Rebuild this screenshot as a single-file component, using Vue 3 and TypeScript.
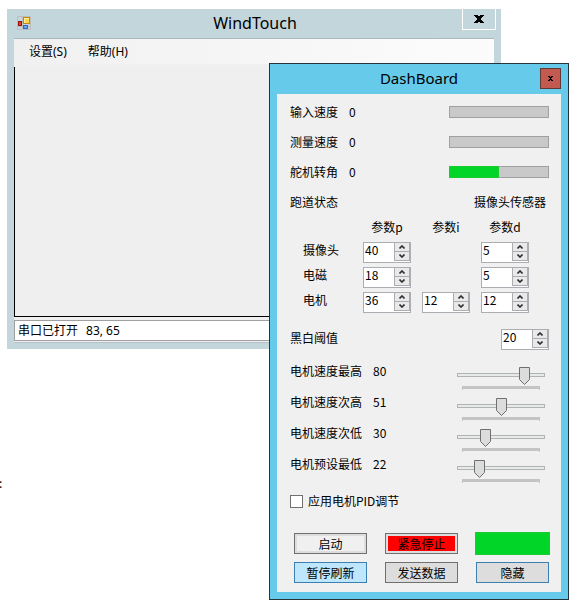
<script setup lang="ts">
import { reactive, ref } from 'vue'

interface Meter { label: string; value: number; fill: number }
interface Param { label: string; p: number | null; i: number | null; d: number | null }
interface Speed { label: string; value: number }
type Key = 'p' | 'i' | 'd'

const meters = reactive<Meter[]>([
  { label: '输入速度', value: 0, fill: 0 },
  { label: '测量速度', value: 0, fill: 0 },
  { label: '舵机转角', value: 0, fill: 50 },
])

const keys: Key[] = ['p', 'i', 'd']

const params = reactive<Param[]>([
  { label: '摄像头', p: 40, i: null, d: 5 },
  { label: '电磁', p: 18, i: null, d: 5 },
  { label: '电机', p: 36, i: 12, d: 12 },
])

const threshold = ref(20)

const speeds = reactive<Speed[]>([
  { label: '电机速度最高', value: 80 },
  { label: '电机速度次高', value: 51 },
  { label: '电机速度次低', value: 30 },
  { label: '电机预设最低', value: 22 },
])

const usePid = ref(false)

function step(row: Param, key: Key, delta: number) {
  row[key] = (row[key] ?? 0) + delta
}
</script>

<template>
  <div class="desktop">
    <section class="window main">
      <header class="main-title">
        <svg class="app-icon" width="14" height="14" viewBox="0 0 14 14" aria-hidden="true">
          <path d="M0.5 0.5h13v13h-13zM5.500 0v14M0 10.500h14" fill="none" stroke="#bdbdbd" />
          <rect x="6.500" y="1.500" width="6" height="6" fill="#ffd84a" stroke="#c08a10" />
          <path d="M7 2h5v1H8v4H7z" fill="#fff0a0" />
          <rect x="1.500" y="5.500" width="3" height="4" fill="#d8452c" stroke="#9c1408" />
          <rect x="6.500" y="9.500" width="4" height="3" fill="#6ba2f2" stroke="#3567c4" />
        </svg>
        <h1>WindTouch</h1>
        <button class="main-close" type="button" aria-label="关闭">
          <svg width="10" height="8" viewBox="0 0 10 8"><path d="M0 0h4v1h2V0h4v1H9v1H8v1H7v2h1v1h1v1h1v1H6V7H4v1H0V7h1V6h1V5h1V3H2V2H1V1H0z" fill="#000" /></svg>
        </button>
      </header>
      <div class="client">
        <nav class="menu">
          <button type="button">设置(S)</button>
          <button type="button">帮助(H)</button>
        </nav>
        <div class="canvas"></div>
        <footer class="status"><span>串口已打开</span><span>83, 65</span></footer>
      </div>
    </section>

    <span class="stray">:</span>

    <section class="window dash">
      <header class="dash-title">
        <h2>DashBoard</h2>
        <button class="dash-close" type="button" aria-label="关闭">
          <svg width="5" height="5" viewBox="0 0 5 5"><path d="M0 0h2v1h1V0h2v1H4v1H3v1h1v1h1v1H3V4H2v1H0V4h1V3h1V2H1V1H0z" fill="#000" /></svg>
        </button>
      </header>

      <div class="panel">
        <div v-for="m in meters" :key="m.label" class="row">
          <span class="name">{{ m.label }}</span>
          <output>{{ m.value }}</output>
          <div class="meter"><div v-if="m.fill" class="fill" :style="{ width: m.fill + '%' }"></div></div>
        </div>
        <div class="row">
          <span class="name">跑道状态</span>
          <span class="sensor">摄像头传感器</span>
        </div>

        <div class="params">
          <span></span>
          <span v-for="k in keys" :key="k" class="head">参数{{ k }}</span>
          <template v-for="row in params" :key="row.label">
            <span class="param-name">{{ row.label }}</span>
            <div v-for="k in keys" :key="k">
              <div v-if="row[k] !== null" class="spin">
                <input v-model.number="row[k]" type="number" :aria-label="row.label + '参数' + k" />
                <div class="arrows">
                  <button type="button" aria-label="增加" @click="step(row, k, 1)">
                    <svg width="6" height="4" viewBox="0 0 6 4"><path d="M0.500 3.500L3 1L5.500 3.500" fill="none" stroke="#303030" stroke-width="1.600" /></svg>
                  </button>
                  <button type="button" aria-label="减少" @click="step(row, k, -1)">
                    <svg width="6" height="4" viewBox="0 0 6 4"><path d="M0.500 0.500L3 3L5.500 0.500" fill="none" stroke="#303030" stroke-width="1.600" /></svg>
                  </button>
                </div>
              </div>
            </div>
          </template>
        </div>

        <div class="threshold">
          <label for="threshold">黑白阈值</label>
          <div class="spin">
            <input id="threshold" v-model.number="threshold" type="number" />
            <div class="arrows">
              <button type="button" aria-label="增加" @click="threshold++">
                <svg width="6" height="4" viewBox="0 0 6 4"><path d="M0.500 3.500L3 1L5.500 3.500" fill="none" stroke="#303030" stroke-width="1.600" /></svg>
              </button>
              <button type="button" aria-label="减少" @click="threshold--">
                <svg width="6" height="4" viewBox="0 0 6 4"><path d="M0.500 0.500L3 3L5.500 0.500" fill="none" stroke="#303030" stroke-width="1.600" /></svg>
              </button>
            </div>
          </div>
        </div>

        <div v-for="(s, n) in speeds" :key="s.label" class="speed">
          <label :for="'speed' + n">{{ s.label }}</label>
          <output>{{ s.value }}</output>
          <div class="slider">
            <input :id="'speed' + n" v-model.number="s.value" type="range" min="0" max="100" />
            <div class="ticks"></div>
          </div>
        </div>

        <label class="check"><input v-model="usePid" type="checkbox" />应用电机PID调节</label>

        <div class="actions">
          <button class="btn start" type="button">启动</button>
          <button class="btn stop" type="button">紧急停止</button>
          <div class="lamp"></div>
          <button class="btn hot" type="button">暂停刷新</button>
          <button class="btn" type="button">发送数据</button>
          <button class="btn focus" type="button">隐藏</button>
        </div>
      </div>
    </section>
  </div>
</template>

<style>
body {
  background: #fff;
}
</style>

<style scoped>
.desktop,
.desktop * {
  box-sizing: border-box;
}
.desktop {
  position: relative;
  min-height: 100vh;
  padding: 9px 72px 0 7px;
  overflow: hidden;
  color: #000;
  font: 12px/18px "Noto Sans CJK SC", sans-serif;
}
button,
input {
  margin: 0;
  padding: 0;
  border: 0;
  border-radius: 0;
  background: none;
  color: inherit;
  font: inherit;
}
svg {
  display: block;
}
h1,
h2 {
  margin: 0;
  font: 16px/28px "Noto Sans", "Open Sans", sans-serif;
}
.main {
  padding-bottom: 6px;
  background: #c3d6dc;
}
.main-title {
  display: grid;
  grid-template-columns: 34px 1fr 34px;
  height: 29px;
  padding: 0 5px 0 7px;
  text-align: center;
}
.app-icon {
  margin: 7px 0 0 3px;
}
.main-close {
  display: grid;
  place-items: center;
  width: 34px;
  height: 21px;
  border: 1px solid #fff;
  border-top: 0;
}
.client {
  margin: 0 7px;
  padding-bottom: 1px;
  border-top: 1px solid #a9b9c4;
  border-bottom: 1px solid #b4c0c6;
  background: #f0f0f0;
}
.menu {
  display: flex;
  gap: 21px;
  height: 25px;
  padding-left: 15px;
  background: linear-gradient(90deg, #f0f0f0, #fcfcfc);
  font-family: "Noto Sans", "Noto Sans CJK SC", sans-serif;
}
.canvas {
  height: 250px;
  margin: 3px 0;
  border-left: 1px solid #000;
  border-bottom: 1px solid #000;
  background: #efefef;
}
.status {
  display: flex;
  gap: 8px;
  align-items: center;
  height: 21px;
  padding: 0 3px;
  border: 1px solid #a0a0a0;
  background: #fff;
  font-family: "Noto Sans", "Noto Sans CJK SC", sans-serif;
}
.stray {
  position: absolute;
  top: 474px;
  left: -1px;
}
.dash {
  position: absolute;
  top: 63px;
  right: 4px;
  left: 269px;
  padding: 0 7px 7px;
  border: 1px solid #26343b;
  background: #66caea;
}
.dash-title {
  display: grid;
  grid-template-columns: 21px 1fr 21px;
  height: 30px;
}
.dash-title h2 {
  grid-column: 2;
  font-size: 15px;
  text-align: center;
}
.dash-close {
  display: grid;
  place-items: center;
  width: 21px;
  height: 21px;
  margin-top: 4px;
  border: 1px solid #633938;
  background: #c35a50;
}
.panel {
  padding: 3px 12px 9px 13px;
  background: #f0f0f0;
}
.row {
  display: flex;
  align-items: center;
  height: 30px;
}
.name {
  margin-right: 11px;
}
.meter {
  width: 100px;
  height: 12px;
  margin-left: auto;
  background: #c9c9c9;
  box-shadow: inset 0 0 0 1px #a0a0a0;
}
.fill {
  height: 100%;
  border: 1px solid #1ccb33;
  background: #00d528;
}
.sensor {
  margin: 0 3px 0 auto;
}
.params {
  display: grid;
  grid-template-columns: 49px 48px 48px 48px;
  grid-auto-rows: 21px;
  gap: 4px 11px;
  padding-left: 13px;
}
.head {
  line-height: 20px;
  text-align: center;
}
.param-name {
  line-height: 16px;
}
.spin {
  display: grid;
  grid-template-columns: 1fr 16px;
  width: 48px;
  height: 21px;
  border: 1px solid #abadb3;
  background: #fff;
}
.spin input {
  width: 100%;
  height: 14px;
  padding-left: 1px;
  outline: 0;
  line-height: 14px;
  appearance: textfield;
}
.spin input::-webkit-inner-spin-button {
  appearance: none;
}
.arrows {
  display: grid;
  grid-template-rows: 9px 9px;
}
.arrows button {
  display: grid;
  place-items: center;
  border: 1px solid #abadb3;
  border-top-width: 0;
  background: #e9e9e9;
}
.threshold {
  display: flex;
  justify-content: space-between;
  margin: 16px 0 12px;
}
.speed {
  display: flex;
  height: 31px;
}
.speed output {
  margin-left: 11px;
}
.slider {
  width: 88px;
  margin: 4px 4px 0 auto;
}
.slider input {
  display: block;
  width: 100%;
  height: 18px;
  appearance: none;
}
.slider input::-webkit-slider-runnable-track {
  height: 4px;
  background: #e7eaea;
  box-shadow: inset 0 0 0 1px #b0b3b2;
}
.slider input::-webkit-slider-thumb {
  width: 11px;
  height: 18px;
  margin-top: -6px;
  appearance: none;
  background: url("data:image/svg+xml,%3Csvg xmlns='http://www.w3.org/2000/svg' width='11' height='18'%3E%3Cpath d='M.5.5h10v12l-5 5-5-5z' fill='%23dcdcdc' stroke='%23707070'/%3E%3C/svg%3E");
}
.ticks {
  height: 4px;
  margin: 2px 5px 0;
  border: 1px solid #c4c4c4;
  border-top-width: 3px;
  border-bottom: 0;
}
.check {
  display: flex;
  gap: 5px;
  align-items: center;
  margin-top: 6px;
}
.check input {
  width: 13px;
  height: 13px;
  border: 1px solid #707070;
  appearance: none;
  background: #fff;
}
.check input:checked {
  background: #3c7fb1;
}
.actions {
  display: grid;
  grid-template-columns: repeat(3, 1fr);
  grid-auto-rows: 21px;
  gap: 8px 18px;
  margin: 23px 0 0 4px;
}
.btn {
  border: 1px solid #707070;
  background: #ddd;
  line-height: 17px;
}
.start {
  background: #f0f0f0;
  box-shadow: inset 0 0 0 2px #ddd;
}
.stop {
  background: #f00;
  box-shadow: inset 0 0 0 2px #ddd;
}
.hot {
  border-color: #3c7fb1;
  background: #bee6fd;
}
.focus {
  border-color: #3c7fb1;
}
.lamp {
  margin: -1px;
  border: 1px solid #1ccb33;
  background: #00d528;
}
</style>
